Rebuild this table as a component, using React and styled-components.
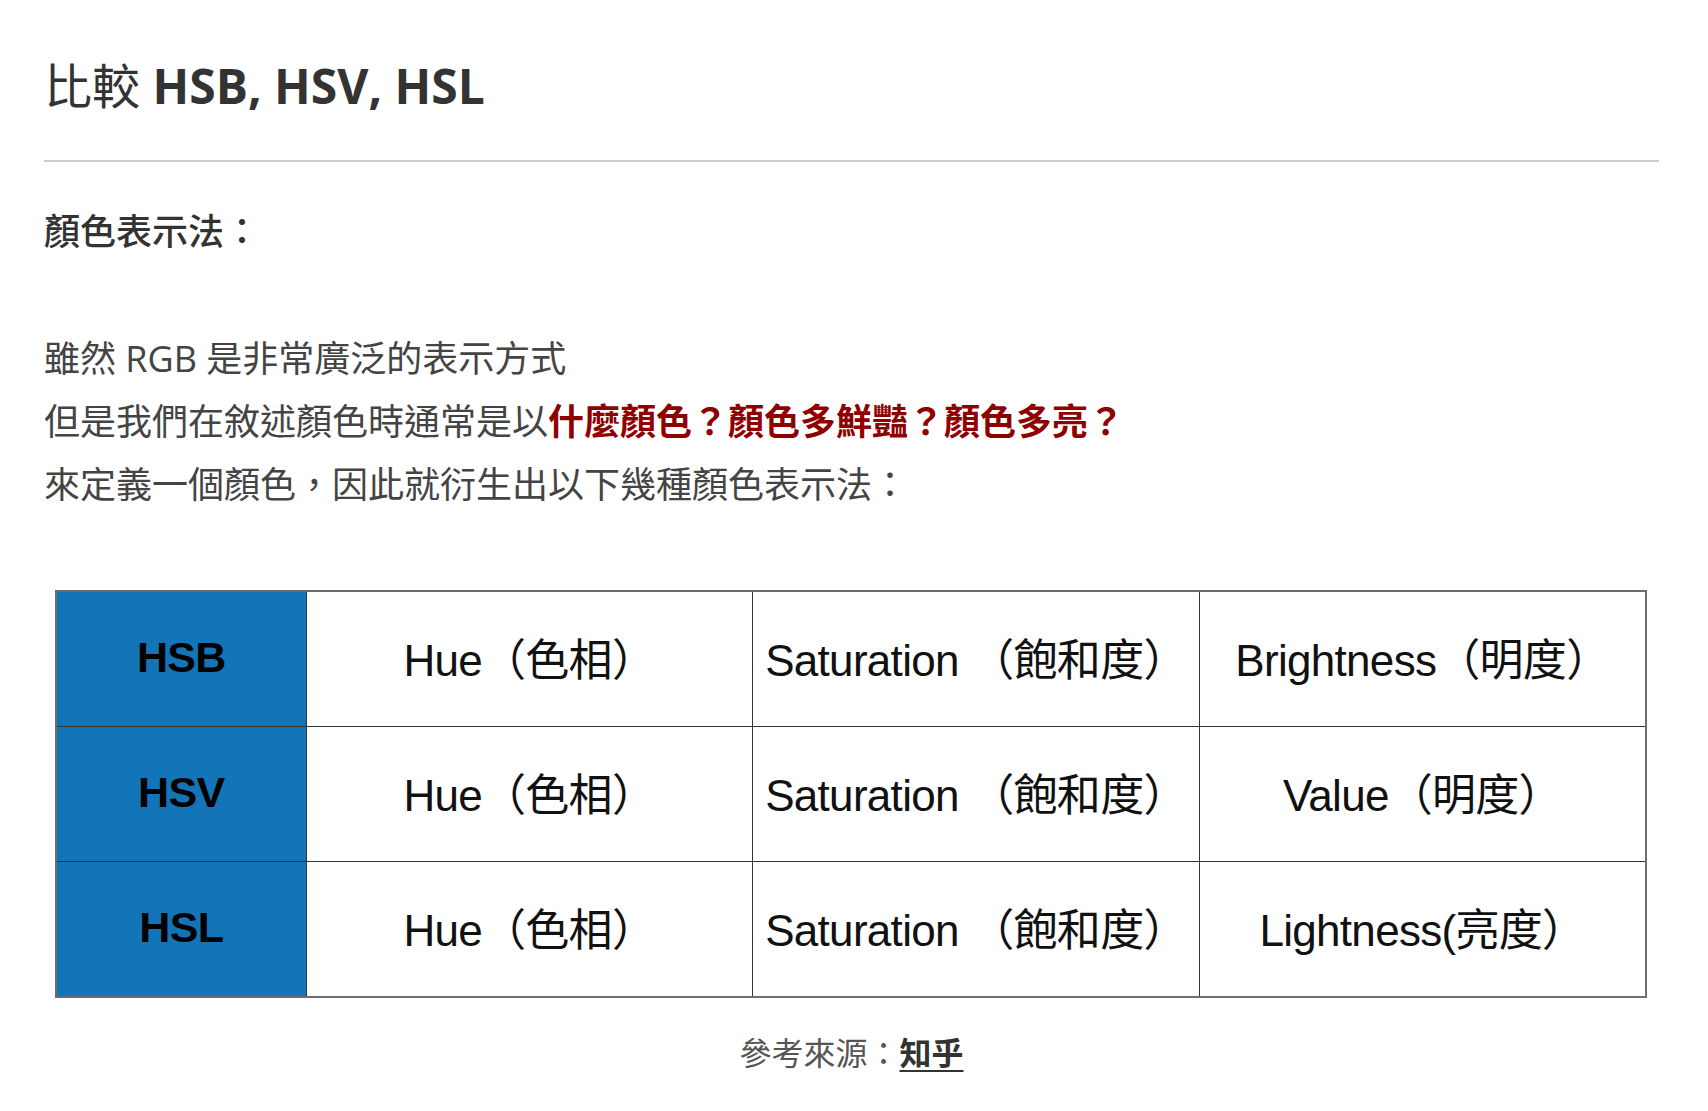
import styled, { createGlobalStyle } from "styled-components";

const GlobalStyle = createGlobalStyle`
  body {
    margin: 0;
    background: #fff;
    font-family: "Open Sans", "Noto Sans CJK TC", sans-serif;
  }
`;

const Container = styled.div`
  width: 1615px;
  margin-left: 44px;
  padding-top: 56px;
  color: #444;
`;

const Title = styled.h2`
  margin: 0;
  font-size: 48px;
  line-height: 60px;
  font-weight: 700;
  color: #333;
`;

const Plain = styled.span`
  font-weight: 400;
`;

const Divider = styled.hr`
  margin: 44px 0 0;
  border: none;
  height: 2px;
  background: #ccc;
`;

const SubHead = styled.p`
  margin: 38px 0 0;
  font-size: 36px;
  line-height: 63px;
  font-weight: 500;
  color: #333;
`;

const Body = styled.p`
  margin: 64px 0 0;
  font-size: 36px;
  line-height: 63px;
  color: #444;
`;

const Mark = styled.strong`
  color: #8f0000;
  font-weight: 700;
`;

const Table = styled.table`
  margin: 74px 0 0 11px;
  width: 1592px;
  border-collapse: collapse;
  border: 2px solid #6e6e6e;
  table-layout: fixed;
  font-family: "Liberation Sans", "Noto Sans CJK TC", sans-serif;
`;

const Cell = styled.td`
  height: 130px;
  padding: 0 0 4px;
  border: 1px solid #333;
  text-align: center;
  vertical-align: middle;
  font-size: 44px;
  letter-spacing: -0.7px;
  color: #111;
  background: ${(p) => (p.$head ? "#1474b8" : "#fff")};
  font-weight: ${(p) => (p.$head ? 700 : 400)};
  ${(p) => p.$head && "color: #000; font-size: 43px;"}
`;

const Caption = styled.p`
  margin: 30px 0 0;
  text-align: center;
  font-size: 32px;
  line-height: 50px;
  color: #555;
`;

const Source = styled.a`
  color: #333;
  font-weight: 700;
  text-decoration: underline;
  text-decoration-thickness: 2px;
  text-underline-offset: 5px;
`;

const rows = [
  ["HSB", "Hue（色相）", "Saturation （飽和度）", "Brightness（明度）"],
  ["HSV", "Hue（色相）", "Saturation （飽和度）", "Value（明度）"],
  ["HSL", "Hue（色相）", "Saturation （飽和度）", "Lightness(亮度）"],
];

const App = () => {
  return (
    <Container>
      <GlobalStyle />
      <Title>
        <Plain>比較</Plain> HSB, HSV, HSL
      </Title>
      <Divider />
      <SubHead>顏色表示法：</SubHead>
      <Body>
        雖然 RGB 是非常廣泛的表示方式
        <br />
        但是我們在敘述顏色時通常是以<Mark>什麼顏色？顏色多鮮豔？顏色多亮？</Mark>
        <br />
        來定義一個顏色，因此就衍生出以下幾種顏色表示法：
      </Body>
      <Table>
        <colgroup>
          <col style={{ width: 250 }} />
          <col />
          <col />
          <col />
        </colgroup>
        <tbody>
          {rows.map((r) => (
            <tr key={r[0]}>
              {r.map((c, i) => (
                <Cell key={i} $head={i === 0}>
                  {c}
                </Cell>
              ))}
            </tr>
          ))}
        </tbody>
      </Table>
      <Caption>
        參考來源：<Source href="#">知乎</Source>
      </Caption>
    </Container>
  );
};

export default App;
